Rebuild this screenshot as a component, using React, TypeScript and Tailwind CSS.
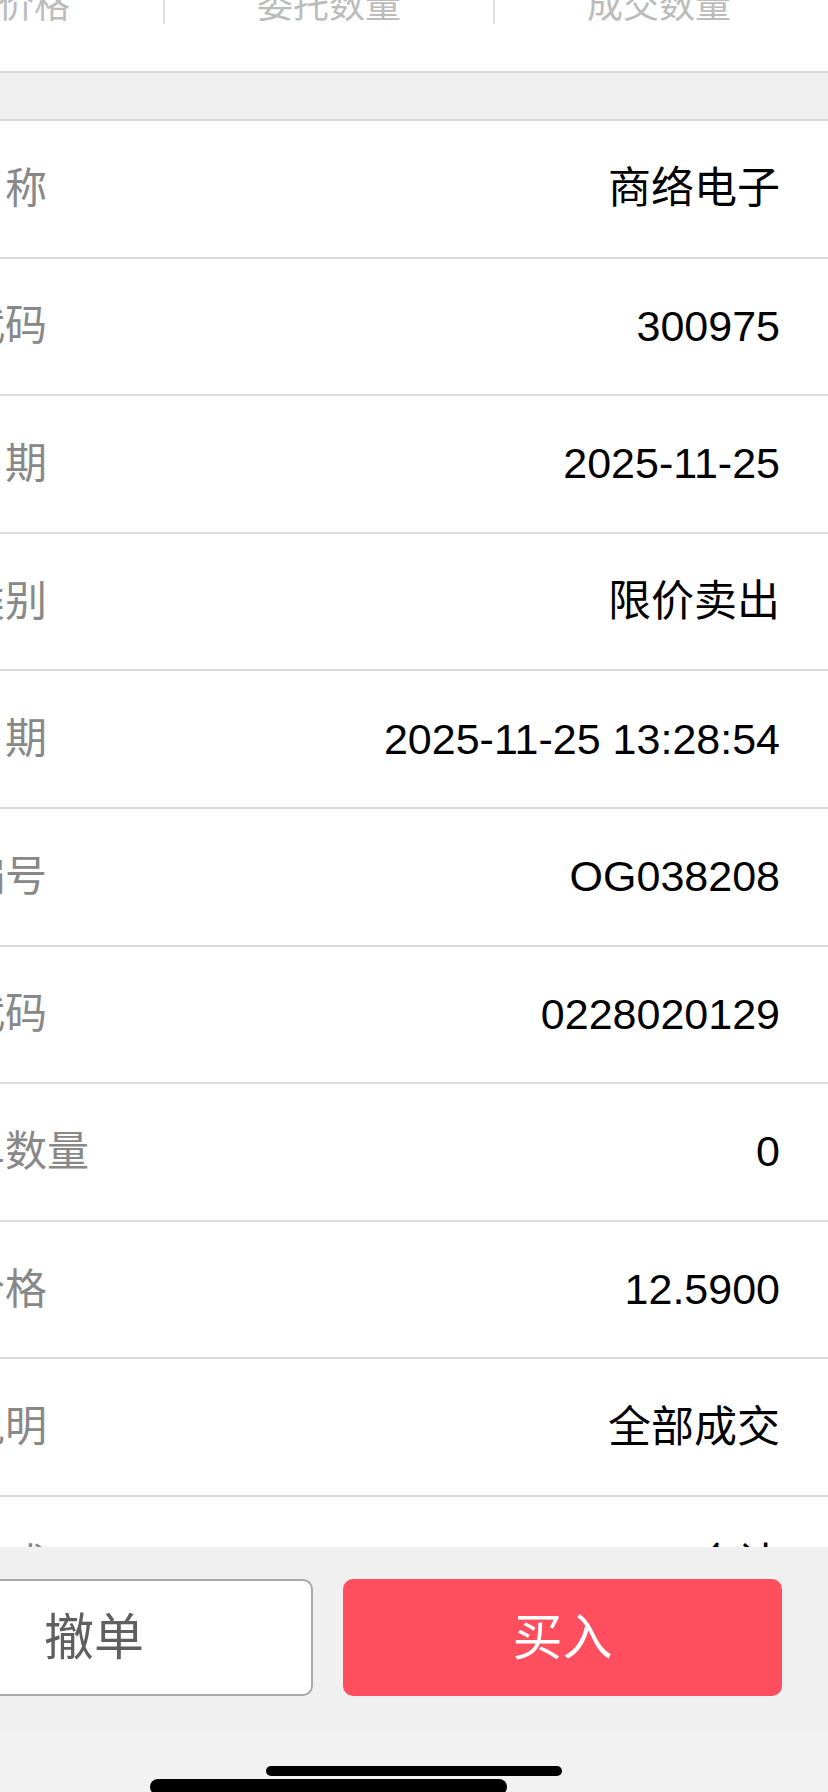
import React from "react";

const rows: { label: string; value: string }[] = [
  { label: "证券名称", value: "商络电子" },
  { label: "证券代码", value: "300975" },
  { label: "委托日期", value: "2025-11-25" },
  { label: "委托类别", value: "限价卖出" },
  { label: "成交日期", value: "2025-11-25 13:28:54" },
  { label: "委托编号", value: "OG038208" },
  { label: "股东代码", value: "0228020129" },
  { label: "已撤单数量", value: "0" },
  { label: "成交价格", value: "12.5900" },
  { label: "状态说明", value: "全部成交" },
  { label: "交易方式", value: "合计" },
];

const headers = ["委托价格", "委托数量", "成交数量"];

export default function App() {
  return (
    <div className="w-[828px] h-[1792px] flex flex-col overflow-hidden bg-white font-['Liberation_Sans','Noto_Sans_CJK_SC',sans-serif]">
      <div className="flex-1 min-h-0 overflow-hidden bg-white">
        {/* table header (scrolled, only bottom part visible) */}
        <div className="h-[73px] border-b-2 border-[#dadada] overflow-hidden">
          <div className="flex ml-[-167px] h-[24px]">
            {headers.map((h, i) => (
              <div
                key={h}
                className={
                  i === 0
                    ? "w-[330px] h-[24px] flex justify-center"
                    : "w-[330px] h-[24px] flex justify-center border-l-2 border-[#e0e0e0]"
                }
              >
                <span className="block text-[36px] leading-[36px] mt-[-12px] text-[#bcbcbc] whitespace-nowrap">
                  {h}
                </span>
              </div>
            ))}
          </div>
        </div>
        {/* gray band */}
        <div className="h-[48px] bg-[#efefef] border-b-2 border-[#dadada]" />
        {/* detail rows */}
        {rows.map((r) => (
          <div
            key={r.label}
            className="h-[137.6px] border-b-2 border-[#dadada] flex items-center justify-between pr-[48px] bg-white"
          >
            <span className="ml-[-121px] text-[42px] leading-[42px] text-[#888888] whitespace-nowrap">
              {r.label}
            </span>
            <span className="text-[43px] leading-[43px] text-black whitespace-nowrap">
              {r.value}
            </span>
          </div>
        ))}
      </div>
      {/* bottom action bar */}
      <div className="h-[182px] shrink-0 bg-[#f0f0f0] pt-[32px] overflow-hidden">
        <div className="flex gap-[30px] ml-[-125px]">
          <button className="w-[438px] h-[117px] shrink-0 rounded-[10px] bg-white border-2 border-[#a9a9a9] text-[50px] leading-[50px] text-[#5f5f5f] flex items-center justify-center">
            撤单
          </button>
          <button className="w-[439px] h-[117px] shrink-0 rounded-[10px] bg-[#ff4f5e] text-[50px] leading-[50px] text-white flex items-center justify-center">
            买入
          </button>
        </div>
      </div>
      {/* home indicator area */}
      <div className="h-[63px] shrink-0 bg-[#f2f2f2] overflow-hidden pt-[37px]">
        <div className="ml-[266px] w-[296px] h-[10px] rounded-full bg-black" />
        <div className="ml-[150px] mt-[3px] w-[357px] h-[16px] rounded-full bg-black" />
      </div>
    </div>
  );
}
